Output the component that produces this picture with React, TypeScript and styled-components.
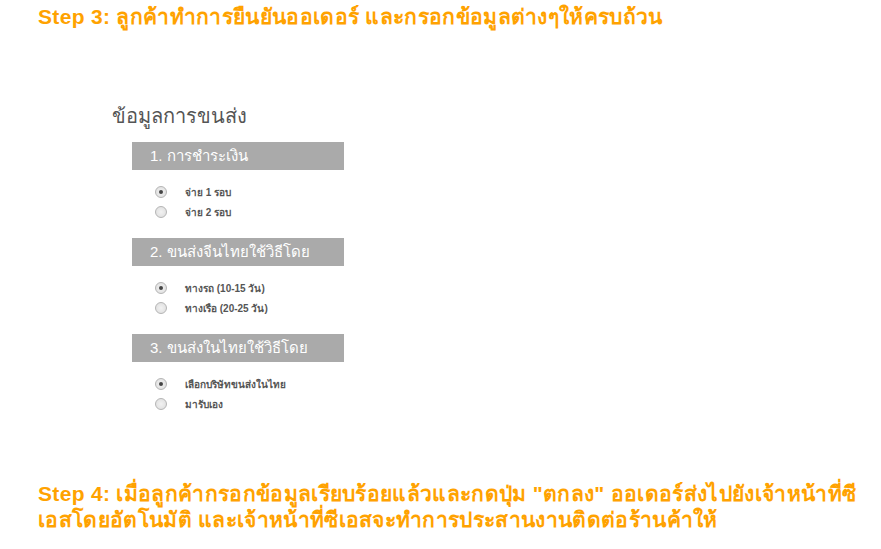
import React from "react";
import styled, { createGlobalStyle } from "styled-components";

const Global = createGlobalStyle`
  html, body { margin: 0; padding: 0; background: #fff; }
  body { font-family: "Liberation Sans", Arial, "Noto Sans", sans-serif; }
`;

const Page = styled.div`
  width: 881px;
  height: 549px;
  display: flex;
  flex-direction: column;
  padding: 4px 0 0 38px;
  box-sizing: border-box;
`;

const StepText = styled.div<{ $top?: number }>`
  color: #ffa200;
  font-weight: bold;
  font-size: 21px;
  line-height: 26px;
  letter-spacing: 0.32px;
  white-space: nowrap;
  margin-top: ${(p) => p.$top ?? 0}px;
`;

const Form = styled.div`
  margin: 74px 0 0 74px;
  display: flex;
  flex-direction: column;
`;

const FormTitle = styled.div`
  color: #555;
  font-size: 20px;
  line-height: 24px;
  margin-bottom: 14px;
`;

const Section = styled.div`
  margin-left: 20px;
  display: flex;
  flex-direction: column;
  margin-bottom: 18px;
`;

const SectionBar = styled.div`
  width: 212px;
  height: 28px;
  background: #aaaaaa;
  color: #fff;
  font-size: 15px;
  display: flex;
  align-items: center;
  padding-left: 18px;
  box-sizing: border-box;
`;

const Options = styled.div`
  display: flex;
  flex-direction: column;
  gap: 4px;
  padding: 14px 0 0 23px;
`;

const Option = styled.div`
  display: flex;
  align-items: center;
  gap: 18px;
  height: 16px;
  color: #555;
  font-size: 10px;
  font-weight: bold;
`;

const Radio = styled.span<{ $on?: boolean }>`
  width: 10px;
  height: 10px;
  border-radius: 50%;
  border: 1px solid #b5b5b5;
  background: radial-gradient(circle, #f2f2f2 0%, #dcdcdc 100%);
  display: flex;
  align-items: center;
  justify-content: center;
  &::after {
    content: "";
    width: 4px;
    height: 4px;
    border-radius: 50%;
    background: ${(p) => (p.$on ? "#444" : "transparent")};
  }
`;

const sections = [
  { title: "1. การชำระเงิน", opts: ["จ่าย 1 รอบ", "จ่าย 2 รอบ"] },
  { title: "2. ขนส่งจีนไทยใช้วิธีโดย", opts: ["ทางรถ (10-15 วัน)", "ทางเรือ (20-25 วัน)"] },
  { title: "3. ขนส่งในไทยใช้วิธีโดย", opts: ["เลือกบริษัทขนส่งในไทย", "มารับเอง"] },
];

export default function App() {
  return (
    <>
      <Global />
      <Page>
        <StepText>Step 3: ลูกค้าทำการยืนยันออเดอร์ และกรอกข้อมูลต่างๆให้ครบถ้วน</StepText>
        <Form>
          <FormTitle>ข้อมูลการขนส่ง</FormTitle>
          {sections.map((s) => (
            <Section key={s.title}>
              <SectionBar>{s.title}</SectionBar>
              <Options>
                {s.opts.map((o, i) => (
                  <Option key={o}>
                    <Radio $on={i === 0} />
                    {o}
                  </Option>
                ))}
              </Options>
            </Section>
          ))}
        </Form>
        <StepText $top={51}>
          Step 4: เมื่อลูกค้ากรอกข้อมูลเรียบร้อยแล้วและกดปุ่ม "ตกลง" ออเดอร์ส่งไปยังเจ้าหน้าที่ซี
          <br />
          เอสโดยอัตโนมัติ และเจ้าหน้าที่ซีเอสจะทำการประสานงานติดต่อร้านค้าให้
        </StepText>
      </Page>
    </>
  );
}
